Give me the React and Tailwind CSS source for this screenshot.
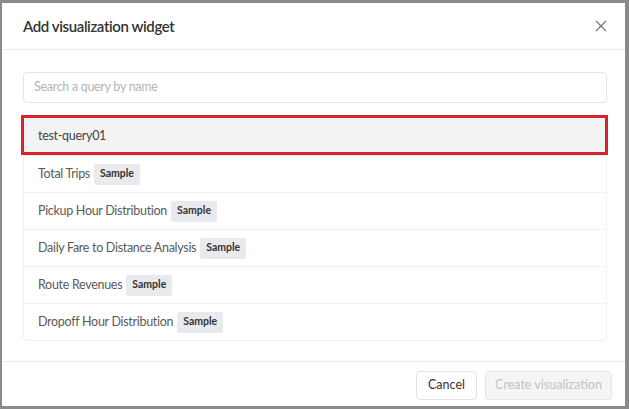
import React from "react";

const queries = [
  { name: "test-query01", sample: false },
  { name: "Total Trips", sample: true },
  { name: "Pickup Hour Distribution", sample: true },
  { name: "Daily Fare to Distance Analysis", sample: true },
  { name: "Route Revenues", sample: true },
  { name: "Dropoff Hour Distribution", sample: true },
];

export default function App() {
  return (
    <div
      className="w-[629px] h-[409px] bg-[#8a8a8a] pt-[3px] pl-[2px] pr-[4px] pb-[3px] overflow-hidden"
      style={{ fontFamily: 'Lato, "Open Sans", Arial, sans-serif' }}
    >
      <div className="relative h-full bg-white flex flex-col">
        {/* Header */}
        <div className="h-[47px] shrink-0 flex items-center justify-between pl-[21px] pr-[14px] border-b border-[#ececec]">
          <h2 className="text-[15px] font-semibold text-[#333] tracking-[-0.4px]">
            Add visualization widget
          </h2>
          <button className="text-[#6b7480] p-1">
            <svg width="12" height="12" viewBox="0 0 12 12" fill="none">
              <path d="M1 1L11 11M11 1L1 11" stroke="currentColor" strokeWidth="1.2" />
            </svg>
          </button>
        </div>

        {/* Body */}
        <div className="flex-1 pt-[22px] pl-[21px] pr-[18px]">
          <div className="h-[31px] border border-[#e6e6e6] rounded-[4px] flex items-center px-[10px]">
            <span className="text-[12.5px] text-[#b5b5b5] tracking-[-0.3px]">Search a query by name</span>
          </div>

          <div className="mt-[14px] border border-[#efefef] rounded-[4px]">
            {queries.map((q, i) => (
              <div
                key={q.name}
                className={`relative h-[37px] flex items-center px-[14px] text-[12.5px] tracking-[-0.3px] text-[#5a5a5a] ${i > 0 ? "border-t border-[#f0f0f0]" : "bg-[#f3f3f3]"}`}
              >
                <span className={i === 0 ? "text-[#444]" : ""}>{q.name}</span>
                {q.sample && (
                  <span className="ml-[4px] h-[21px] px-[6px] flex items-center bg-[#e8eaed] text-[10.5px] tracking-normal font-bold text-[#333] rounded-[2px]">
                    Sample
                  </span>
                )}
                {i === 0 && (
                  <div className="absolute -top-[3px] -left-[3px] -right-[2px] bottom-0 border-[3px] border-[#d7232d]" />
                )}
              </div>
            ))}
          </div>
        </div>

        {/* Footer */}
        <div className="h-[45px] shrink-0 border-t border-[#ececec] flex items-start justify-end gap-[8px] pt-[9px] pr-[13px]">
          <button className="h-[29px] w-[61px] border border-[#e3e3e3] rounded-[4px] text-[12.5px] text-[#333] bg-white">
            Cancel
          </button>
          <button className="h-[29px] w-[127px] border border-[#e6e6e6] rounded-[4px] text-[12.5px] text-[#c2c2c2] bg-[#f5f5f5]">
            Create visualization
          </button>
        </div>
      </div>
    </div>
  );
}
